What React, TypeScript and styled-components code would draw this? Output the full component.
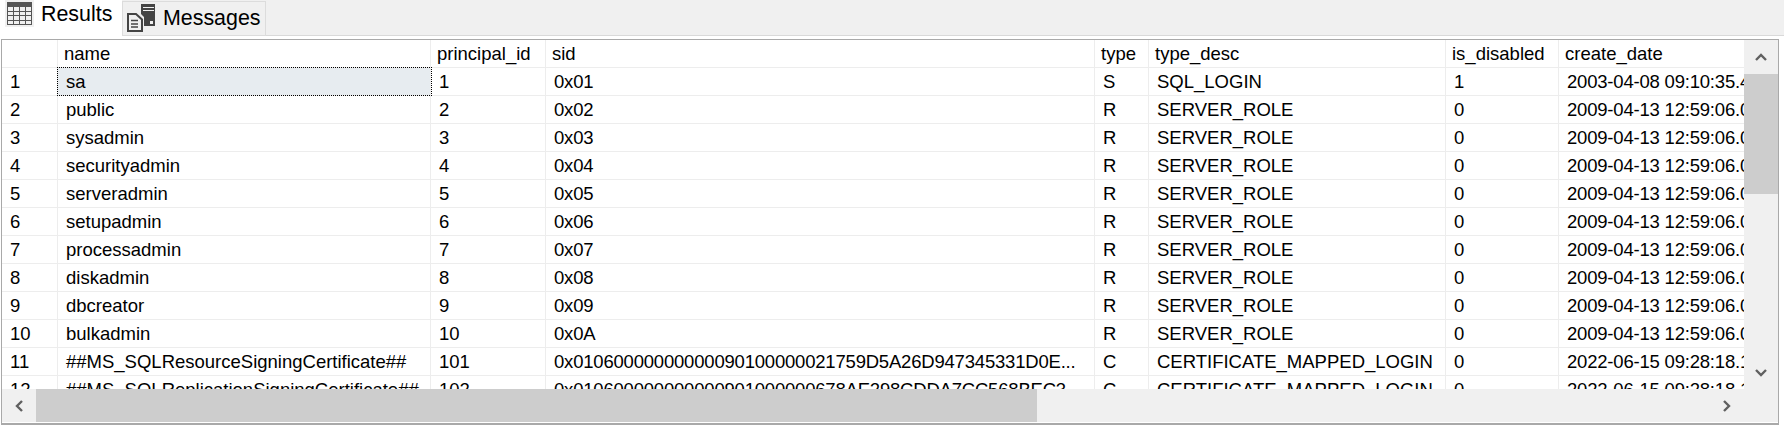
import styled, { createGlobalStyle } from "styled-components";

const GlobalStyle = createGlobalStyle`
  html, body {
    margin: 0;
    padding: 0;
    background: #fff;
    overflow: hidden;
  }
`

const columns = [
  { key: 'row', width: 56, label: '' },
  { key: 'name', width: 373, label: 'name' },
  { key: 'principal_id', width: 115, label: 'principal_id' },
  { key: 'sid', width: 549, label: 'sid', tight: true },
  { key: 'type', width: 54, label: 'type' },
  { key: 'type_desc', width: 297, label: 'type_desc' },
  { key: 'is_disabled', width: 113, label: 'is_disabled' },
  { key: 'create_date', width: 186, label: 'create_date', tight: true },
]

const serverRoles = [
  ['public', '2', '0x02'],
  ['sysadmin', '3', '0x03'],
  ['securityadmin', '4', '0x04'],
  ['serveradmin', '5', '0x05'],
  ['setupadmin', '6', '0x06'],
  ['processadmin', '7', '0x07'],
  ['diskadmin', '8', '0x08'],
  ['dbcreator', '9', '0x09'],
  ['bulkadmin', '10', '0x0A'],
]

const rows = [
  ['sa', '1', '0x01', 'S', 'SQL_LOGIN', '1', '2003-04-08 09:10:35.460'],
  ...serverRoles.map(r => [...r, 'R', 'SERVER_ROLE', '0', '2009-04-13 12:59:06.003']),
  ['##MS_SQLResourceSigningCertificate##', '101', '0x01060000000000090100000021759D5A26D947345331D0E...', 'C', 'CERTIFICATE_MAPPED_LOGIN', '0', '2022-06-15 09:28:18.187'],
  ['##MS_SQLReplicationSigningCertificate##', '102', '0x010600000000000901000000678AE298CDDA7CC568BEC3...', 'C', 'CERTIFICATE_MAPPED_LOGIN', '0', '2022-06-15 09:28:18.190'],
]

const ResultsIcon = () => (
  <svg width="25" height="23" viewBox="0 0 25 23" fill="none" stroke="#555" strokeWidth="1">
    <rect x="0.5" y="0.5" width="24" height="22" />
    <rect x="0.5" y="0.5" width="24" height="4" fill="#555" />
    <path d="M0 9.5H25M0 13.5H25M0 18.5H25M6.5 5V23M12.5 5V23M18.5 5V23" />
  </svg>
)

const MessagesIcon = () => (
  <svg width="29" height="28" viewBox="0 0 29 28">
    <path d="M1 10H9L15 15.5V27H1Z" fill="#f0f0f0" stroke="#444" strokeWidth="2" />
    <path d="M4 16.5H11M4 20H11M4 23H11" stroke="#444" strokeWidth="1.5" />
    <path d="M14 0H28V22H17V13L14 10Z" fill="#444" />
    <path d="M16 3.5H27M16 6.5H27" stroke="#f0f0f0" strokeWidth="1" />
    <rect x="23" y="17" width="3" height="3" fill="#f0f0f0" />
  </svg>
)

const Chevron = ({ dir }: { dir: 'up' | 'down' | 'left' | 'right' }) => {
  const d = {
    up: 'M1 7L6 2L11 7',
    down: 'M1 2L6 7L11 2',
    left: 'M7 1L2 6L7 11',
    right: 'M2 1L7 6L2 11',
  }[dir]
  const vertical = dir === 'up' || dir === 'down'
  return (
    <svg width={vertical ? 12 : 9} height={vertical ? 9 : 12} viewBox={vertical ? '0 0 12 9' : '0 0 9 12'} fill="none" stroke="#606060" strokeWidth="2.4">
      <path d={d} />
    </svg>
  )
}

const App = () => {
  return (
    <Wrapper>
      <GlobalStyle />
      <TabStrip>
        <ResultsTab>
          <IconBox><ResultsIcon /></IconBox>
          <span>Results</span>
        </ResultsTab>
        <MessagesTab>
          <MessagesIcon />
          <span>Messages</span>
        </MessagesTab>
      </TabStrip>

      <GridFrame>
        <GridBody>
          <Viewport>
            <Row>
              {columns.map(col => (
                <HeaderCell key={col.key} $width={col.width}>{col.label}</HeaderCell>
              ))}
            </Row>
            {rows.map((row, index) => (
              <Row key={index}>
                <RowNumber $width={columns[0].width}>{index + 1}</RowNumber>
                {row.map((value, cIndex) => (
                  <Cell
                    key={cIndex}
                    $width={columns[cIndex + 1].width}
                    $tight={columns[cIndex + 1].tight}
                    $selected={index === 0 && cIndex === 0}
                  >
                    {value}
                  </Cell>
                ))}
              </Row>
            ))}
          </Viewport>
          <VScroll>
            <VButton><Chevron dir="up" /></VButton>
            <VThumb />
            <VButton $end><Chevron dir="down" /></VButton>
          </VScroll>
        </GridBody>
        <HScroll>
          <HButton><Chevron dir="left" /></HButton>
          <HThumb />
          <HButton $end><Chevron dir="right" /></HButton>
        </HScroll>
      </GridFrame>
    </Wrapper>
  )
}

const Wrapper = styled.div`
  width: 1784px;
  height: 425px;
  overflow: hidden;
  background: #fff;
  font-family: "Liberation Sans", Arial, sans-serif;
  font-size: 18.5px;
  color: #000;
`

const TabStrip = styled.div`
  display: flex;
  height: 36px;
  box-sizing: border-box;
  background: #f0f0f0;
  border-bottom: 1px solid #d9d9d9;
`

const ResultsTab = styled.div`
  width: 122px;
  height: 36px;
  box-sizing: border-box;
  background: #fff;
  display: flex;
  align-items: flex-start;
  gap: 7px;
  padding-left: 5px;
  span {
    margin-top: 2px;
    font-size: 21.4px;
    line-height: 25px;
  }
`

const IconBox = styled.div`
  width: 29px;
  height: 27px;
  box-sizing: border-box;
  background: #f0f0f0;
  display: flex;
  align-items: flex-start;
  padding: 2px 0 0 2px;
`

const MessagesTab = styled.div`
  width: 144px;
  height: 35px;
  margin-top: 1px;
  box-sizing: border-box;
  background: #f0f0f0;
  border: 1px solid #dcdcdc;
  display: flex;
  align-items: flex-start;
  gap: 7px;
  padding: 2px 0 0 4px;
  span {
    margin-top: 2px;
    font-size: 21.4px;
    line-height: 25px;
  }
`

const GridFrame = styled.div`
  margin: 3px 5px 0 1px;
  height: 386px;
  box-sizing: border-box;
  border: 1px solid #a9a9a9;
  border-bottom-width: 2px;
  display: flex;
  flex-direction: column;
`

const GridBody = styled.div`
  display: flex;
  height: 349px;
`

const Viewport = styled.div`
  width: 1742px;
  height: 349px;
  overflow: hidden;
`

const Row = styled.div`
  display: flex;
  height: 28px;
  box-sizing: border-box;
  border-bottom: 1px solid #ededed;
`

const BaseCell = styled.div<{ $width: number }>`
  flex: 0 0 ${p => p.$width}px;
  width: ${p => p.$width}px;
  box-sizing: border-box;
  border-right: 1px solid #ededed;
  line-height: 27px;
  white-space: nowrap;
  overflow: hidden;
`

const HeaderCell = styled(BaseCell)`
  padding-left: 6px;
`

const RowNumber = styled(BaseCell)`
  padding-left: 8px;
`

const Cell = styled(BaseCell)<{ $selected?: boolean; $tight?: boolean }>`
  padding-left: 8px;
  letter-spacing: ${p => (p.$tight ? '-0.2px' : 'normal')};
  background: ${p => (p.$selected ? '#e7ecf0' : 'transparent')};
  outline: ${p => (p.$selected ? '1px dotted #000' : 'none')};
  outline-offset: 0;
`

const VScroll = styled.div`
  width: 34px;
  height: 349px;
  background: #f0f0f0;
  display: flex;
  flex-direction: column;
`

const VButton = styled.div<{ $end?: boolean }>`
  height: 34px;
  flex: 0 0 34px;
  margin-top: ${p => (p.$end ? 'auto' : '0')};
  display: flex;
  align-items: center;
  justify-content: center;
`

const VThumb = styled.div`
  height: 120px;
  background: #cdcdcd;
`

const HScroll = styled.div`
  height: 33px;
  background: #f0f0f0;
  display: flex;
  align-items: stretch;
`

const HButton = styled.div<{ $end?: boolean }>`
  width: 34px;
  display: flex;
  align-items: center;
  justify-content: center;
  margin-left: ${p => (p.$end ? 'auto' : '0')};
  margin-right: ${p => (p.$end ? '35px' : '0')};
`

const HThumb = styled.div`
  width: 1001px;
  background: #cdcdcd;
`

export default App;
